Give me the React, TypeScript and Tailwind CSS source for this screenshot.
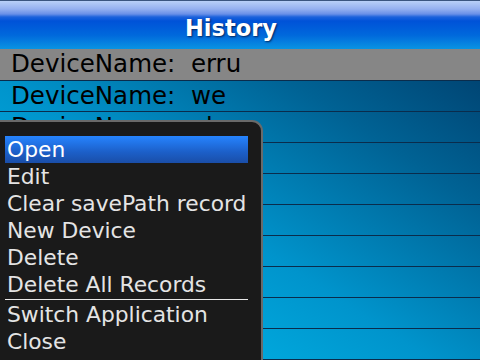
import React from "react";

const rows = ["erru", "we", "ab", "", "", "", "", "", "", ""];

const menuTop = ["Open", "Edit", "Clear savePath record", "New Device", "Delete", "Delete All Records"];
const menuBottom = ["Switch Application", "Close"];

export default function App() {
    return (
        <div className="relative w-[480px] h-[360px] overflow-hidden font-['DejaVu_Sans',sans-serif]">
            <div className="h-[49px] flex items-center justify-center border-t border-[#3a5580] bg-[linear-gradient(to_bottom,#b8d0f8_0px,#94b0f0_8px,#6a90e8_13px,#1c62dc_16px,#0052d8_20px,#0068dc_34px,#0a94e2_48px)]">
                <span className="mr-[18px] mt-[7px] text-[22.5px] font-bold text-white [text-shadow:1px_1px_2px_rgba(0,20,60,0.8)]">History</span>
            </div>
            <div className="h-[311px] bg-[linear-gradient(to_top_right,#00c4f4_0%,#0094cc_45%,#006294_75%,#003e6c_100%)]">
                {rows.map((r, i) => (
                    <div
                        key={i}
                        className={
                            "border-b border-[#0a2c4c] pl-[11px] text-[24.5px] leading-[30px] text-black whitespace-pre " +
                            (i === 0 ? "h-[32px] bg-[#868686]" : "h-[31px]")
                        }
                    >
                        {i < 3 ? "DeviceName:  " + r : ""}
                    </div>
                ))}
            </div>

            <div className="absolute left-0 top-[120px] w-[263px] h-[250px] bg-[#1a1a1a] border-t-2 border-r-2 border-[#6a6a6a] rounded-tr-[11px] pt-[14px] text-[21.8px] text-[#e4e4e4]">
                {menuTop.map((m, i) => (
                    <div
                        key={m}
                        className={
                            "ml-[5px] w-[243px] h-[27px] leading-[27px] pl-[2px] whitespace-nowrap " +
                            (i === 0 ? "bg-[linear-gradient(to_bottom,#2684ff,#1c5fc8_60%,#1a4ea8)] text-white" : "")
                        }
                    >
                        {m}
                    </div>
                ))}
                <div className="ml-[5px] w-[243px] h-[3px] flex items-center">
                    <div className="w-full h-px bg-[#e8e8e8]" />
                </div>
                {menuBottom.map((m) => (
                    <div key={m} className="ml-[5px] w-[243px] h-[27px] leading-[27px] pl-[2px] whitespace-nowrap">
                        {m}
                    </div>
                ))}
            </div>
        </div>
    );
}
